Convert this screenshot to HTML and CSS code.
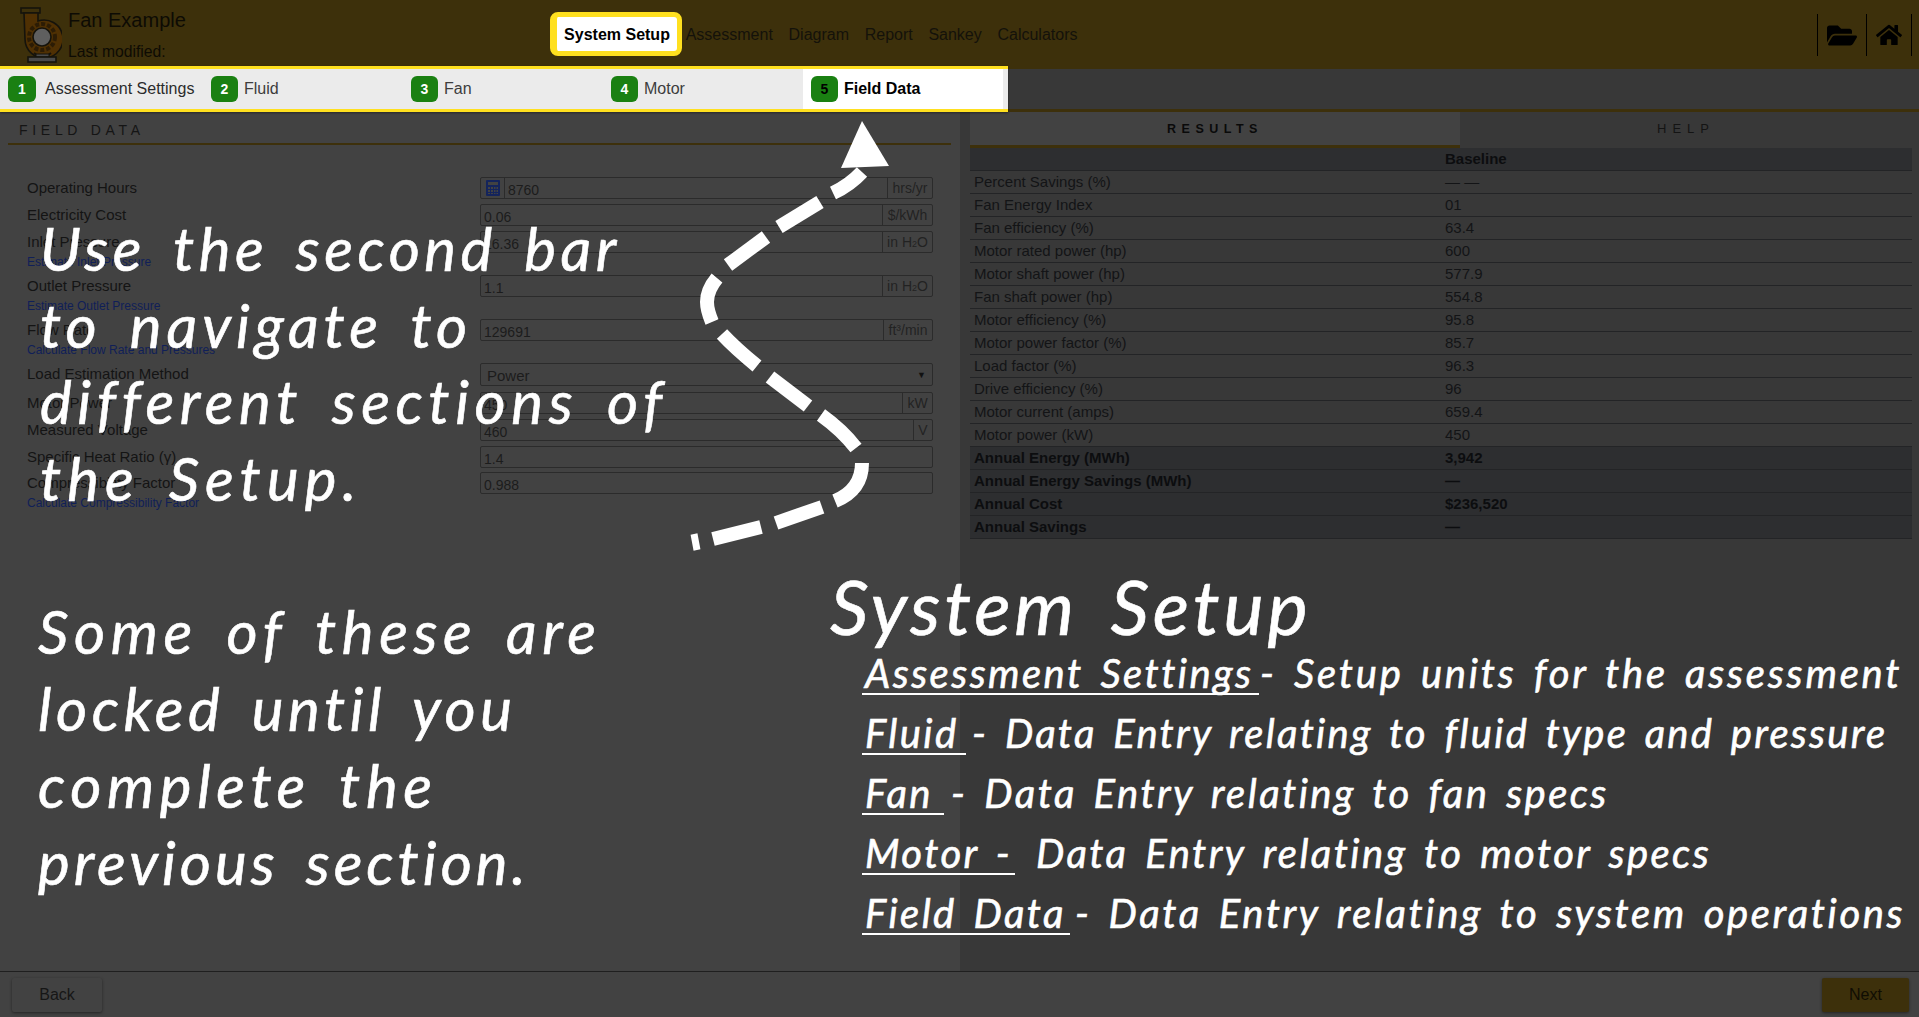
FILE: index.html
```html
<!DOCTYPE html>
<html lang="en">
<head>
<meta charset="utf-8">
<title>Fan Example - System Setup</title>
<link rel="stylesheet" href="styles.css">
</head>
<body>
<div class="app">
  <header class="topbar">
    <svg class="logo" viewBox="0 0 42 56" width="42" height="56">
      <rect x="1" y="1" width="19" height="5" fill="#3d300b" stroke="#15130c" stroke-width="1.6"/>
      <path d="M4 6 H18 V14 A19 19 0 1 1 5 32 Z" fill="#4f3003" stroke="#15130c" stroke-width="1.6"/>
      <circle cx="22" cy="30" r="13" fill="none" stroke="#2c1c05" stroke-width="4" stroke-dasharray="4 2"/>
      <circle cx="22" cy="30" r="9" fill="#5f5f5f" stroke="#15130c" stroke-width="1.6"/>
      <path d="M14 46 L18 49 H27 L31 46" fill="none" stroke="#15130c" stroke-width="2"/>
      <rect x="16" y="47" width="13" height="3" fill="#4a4a4a" stroke="#15130c"/>
      <rect x="8" y="50" width="28" height="5" fill="#4a4a4a" stroke="#15130c" stroke-width="1.6"/>
    </svg>
    <div class="title">
      <div class="title-name">Fan Example</div>
      <div class="title-mod">Last modified:</div>
    </div>
    <nav class="mainnav">
      <a class="mainnav-active">System Setup</a>
      <a>Assessment</a>
      <a>Diagram</a>
      <a>Report</a>
      <a>Sankey</a>
      <a>Calculators</a>
    </nav>
    <div class="tools">
      <span class="tool tool-folder">
        <svg viewBox="0 0 576 512" width="30" height="27"><path d="M572.694 292.093L500.27 416.248A63.997 63.997 0 0 1 444.989 448H45.025c-18.523 0-30.064-20.093-20.731-36.093l72.424-124.155A64 64 0 0 1 152 256h399.964c18.523 0 30.064 20.093 20.73 36.093zM152 224h328v-48c0-26.51-21.49-48-48-48H272l-64-64H48C21.49 64 0 85.49 0 112v278.046l69.077-118.418C86.214 242.25 117.989 224 152 224z"/></svg>
      </span>
      <span class="tool tool-home">
        <svg viewBox="0 0 576 512" width="26" height="24"><path d="M280.37 148.26L96 300.11V464a16 16 0 0 0 16 16l112.06-.29a16 16 0 0 0 15.92-16V368a16 16 0 0 1 16-16h64a16 16 0 0 1 16 16v95.64a16 16 0 0 0 16 16.05L464 480a16 16 0 0 0 16-16V300L295.67 148.26a12.19 12.19 0 0 0-15.3 0zM571.6 251.47L488 182.56V44.05a12 12 0 0 0-12-12h-56a12 12 0 0 0-12 12v72.61L318.47 43a48 48 0 0 0-61 0L4.34 251.47a12 12 0 0 0-1.6 16.9l25.5 31A12 12 0 0 0 45.15 301l235.22-193.74a12.19 12.19 0 0 1 15.3 0L530.9 301a12 12 0 0 0 16.9-1.6l25.5-31a12 12 0 0 0-1.7-16.93z"/></svg>
      </span>
    </div>
  </header>

  <div class="subbar">
    <div class="steps">
      <div class="step step-first"><span class="badge badge-wide">1</span><span class="step-label step-label-wide">Assessment Settings</span></div>
      <div class="step"><span class="badge">2</span><span class="step-label">Fluid</span></div>
      <div class="step"><span class="badge">3</span><span class="step-label">Fan</span></div>
      <div class="step"><span class="badge">4</span><span class="step-label">Motor</span></div>
      <div class="step step-active"><span class="badge">5</span><span class="step-label">Field Data</span></div>
    </div>
  </div>

  <main class="content">
    <section class="left">
      <h2 class="section-title">FIELD DATA</h2>
      <form class="form">
        <div class="row">
          <div class="labels"><label>Operating Hours</label></div>
          <div class="ctl"><span class="calc"><svg viewBox="0 0 14 16" width="14" height="16"><path fill="#14245c" d="M1 0h12a1 1 0 0 1 1 1v14a1 1 0 0 1-1 1H1a1 1 0 0 1-1-1V1a1 1 0 0 1 1-1zm1 2v3h10V2zm0 5v2h2V7zm3 0v2h2V7zm3 0v2h1.500V7zm2.500 0v2H12V7zM2 10v2h2v-2zm3 0v2h2v-2zm3 0v2h1.500v-2zm2.500 0v2H12v-2zM2 13v1h2v-1zm3 0v1h2v-1zm3 0v1h1.500v-1zm2.500 0v1H12v-1z"/></svg></span><span class="val">8760</span><span class="unit u45">hrs/yr</span></div>
        </div>
        <div class="row">
          <div class="labels"><label>Electricity Cost</label></div>
          <div class="ctl"><span class="val">0.06</span><span class="unit u50">$/kWh</span></div>
        </div>
        <div class="row row-tall">
          <div class="labels"><label>Inlet Pressure</label><a class="link">Estimate Inlet Pressure</a></div>
          <div class="ctl"><span class="val">16.36</span><span class="unit u50">in H<span class="sub">2</span>O</span></div>
        </div>
        <div class="row row-tall">
          <div class="labels"><label>Outlet Pressure</label><a class="link">Estimate Outlet Pressure</a></div>
          <div class="ctl"><span class="val">1.1</span><span class="unit u50">in H<span class="sub">2</span>O</span></div>
        </div>
        <div class="row row-tall">
          <div class="labels"><label>Flow Rate</label><a class="link">Calculate Flow Rate and Pressures</a></div>
          <div class="ctl"><span class="val">129691</span><span class="unit u49">ft³/min</span></div>
        </div>
        <div class="row row-select">
          <div class="labels"><label>Load Estimation Method</label></div>
          <div class="ctl ctl-select"><span class="val val-select">Power</span><span class="caret">▼</span></div>
        </div>
        <div class="row">
          <div class="labels"><label>Motor Power</label></div>
          <div class="ctl"><span class="val">450</span><span class="unit u30">kW</span></div>
        </div>
        <div class="row">
          <div class="labels"><label>Measured Voltage</label></div>
          <div class="ctl"><span class="val">460</span><span class="unit u19">V</span></div>
        </div>
        <div class="row row-short">
          <div class="labels"><label>Specific Heat Ratio (γ)</label></div>
          <div class="ctl"><span class="val">1.4</span></div>
        </div>
        <div class="row row-tall">
          <div class="labels"><label>Compressibility Factor</label><a class="link">Calculate Compressibility Factor</a></div>
          <div class="ctl"><span class="val">0.988</span></div>
        </div>
      </form>
    </section>

    <section class="right">
      <div class="tabs">
        <div class="tab tab-active">RESULTS</div>
        <div class="tab">HELP</div>
      </div>
      <div class="table">
        <div class="tr tr-strong"><span></span><span>Baseline</span></div>
        <div class="tr"><span>Percent Savings (%)</span><span>— —</span></div>
        <div class="tr"><span>Fan Energy Index</span><span>01</span></div>
        <div class="tr"><span>Fan efficiency (%)</span><span>63.4</span></div>
        <div class="tr"><span>Motor rated power (hp)</span><span>600</span></div>
        <div class="tr"><span>Motor shaft power (hp)</span><span>577.9</span></div>
        <div class="tr"><span>Fan shaft power (hp)</span><span>554.8</span></div>
        <div class="tr"><span>Motor efficiency (%)</span><span>95.8</span></div>
        <div class="tr"><span>Motor power factor (%)</span><span>85.7</span></div>
        <div class="tr"><span>Load factor (%)</span><span>96.3</span></div>
        <div class="tr"><span>Drive efficiency (%)</span><span>96</span></div>
        <div class="tr"><span>Motor current (amps)</span><span>659.4</span></div>
        <div class="tr"><span>Motor power (kW)</span><span>450</span></div>
        <div class="tr tr-strong"><span>Annual Energy (MWh)</span><span>3,942</span></div>
        <div class="tr tr-strong"><span>Annual Energy Savings (MWh)</span><span>—</span></div>
        <div class="tr tr-strong"><span>Annual Cost</span><span>$236,520</span></div>
        <div class="tr tr-strong"><span>Annual Savings</span><span>—</span></div>
      </div>
    </section>
  </main>

  <footer class="footer">
    <button class="btn" type="button">Back</button>
    <button class="btn btn-next" type="button">Next</button>
  </footer>
</div>

<div class="note note-use"><span class="ls-down">Use the second bar</span><br>to navigate to<br><span class="ls-up">different sections of</span><br><span class="ls-up2">the Setup.</span></div>
<div class="note note-some"><span class="ls-up">Some of these are</span><br><span class="ls-down">locked until you</span><br><span class="ls-up">complete the</span><br><span class="ls-tight">previous section.</span></div>
<div class="note note-title">System Setup</div>
<div class="note note-list">
  <div class="li"><span class="term t1">Assessment Settings</span><span class="wide">- Setup units for the assessment</span></div>
  <div class="li"><span class="term t2">Fluid</span><span class="narrow">- Data Entry relating to fluid type and pressure</span></div>
  <div class="li"><span class="term t3">Fan</span><span>- Data Entry relating to fan specs</span></div>
  <div class="li"><span class="term t4">Motor -</span><span>Data Entry relating to motor specs</span></div>
  <div class="li"><span class="term t5">Field Data</span><span class="slight">- Data Entry relating to system operations</span></div>
</div>

<svg class="arrow" viewBox="0 0 1919 1017" width="1919" height="1017">
  <g fill="none" stroke="#fff" stroke-width="14">
    <path stroke-width="7" d="M694 534L697 550"/>
    <path d="M713 539L761 527"/>
    <path d="M776 523L822 507"/>
    <path d="M835 501Q862 490 862 463"/>
    <path d="M856 448Q842 430 821 415"/>
    <path d="M808 406L770 377"/>
    <path d="M757 366Q735 348 722 334"/>
    <path d="M712 322Q707 310 707 302Q707 290 717 278"/>
    <path d="M728 265L766 237"/>
    <path d="M779 227L820 202"/>
    <path d="M833 193Q850 185 862 172"/>
  </g>
  <polygon fill="#fff" points="862,121 889,166 841,168"/>
</svg>
</body>
</html>
```
FILE: styles.css
```css
* { box-sizing: border-box; }
html, body { margin: 0; padding: 0; height: 100%; overflow: hidden; }
body { font-family: "Liberation Sans", Arial, sans-serif; background: #424242; color: #1f1f1f; position: relative; }
.app { width: 1919px; height: 1017px; display: flex; flex-direction: column; }

/* top bar */
.topbar { height: 69px; flex: none; background: #3d300b; display: flex; align-items: stretch; color: #0d0b04; padding-left: 20px; position: relative; }
.logo { flex: none; margin-top: 7px; }
.title { width: 488px; flex: none; padding-left: 6px; }
.title-name { font-size: 20px; line-height: 24px; margin-top: 8px; }
.title-mod { font-size: 15.700px; line-height: 20px; margin-top: 10px; }
.mainnav { display: flex; align-items: center; font-size: 16px; height: 44px; margin-top: 12px; gap: 15.700px; color: #14120a; }
.mainnav a { white-space: nowrap; padding-top: 2px; }
.mainnav .mainnav-active { background: #fff; color: #000; font-weight: 700; font-size: 16px; height: 44px; width: 132px; border: 5px solid #ffe01f; border-left-width: 7px; border-right-width: 5px; border-radius: 8px; display: flex; align-items: center; justify-content: center; margin-right: -12px; padding-top: 2px; }
.tools { margin-left: auto; margin-top: 14px; height: 42px; display: flex; border-left: 1px solid #000; margin-right: 7px; }
.tool { border-right: 1px solid #000; display: flex; align-items: center; justify-content: center; fill: #000; }
.tool-folder { width: 49px; }
.tool-home { width: 45px; }

/* steps bar */
.subbar { height: 43px; flex: none; background: #383838; border-bottom: 3px solid #3d300b; display: flex; position: relative; }
.steps { width: 1008px; height: 46px; margin-top: -3px; background: #ebebeb; border-top: 3px solid #ffe01f; border-bottom: 3px solid #ffe01f; display: flex; box-shadow: 0 1px 2px rgba(0,0,0,.4); position: relative; }
.step { width: 200px; flex: none; display: flex; align-items: center; padding-left: 8px; color: #3d3d3d; font-size: 16px; }
.step-first { width: 203px; color: #2b2b2b; }
.badge { width: 27px; height: 26px; background: #1a8012; border-radius: 6px; color: #fff; font-weight: 700; font-size: 14px; display: flex; align-items: center; justify-content: center; }
.badge-wide { width: 28px; }
.step-label { margin-left: 6px; white-space: nowrap; }
.step-label-wide { margin-left: 9px; }
.step-active { background: #fff; color: #000; font-weight: 700; }
.step-active .badge { color: #000; }

/* main */
.content { flex: 1; display: flex; min-height: 0; }
.left { width: 960px; flex: none; background: #424242; padding: 0 9px 0 8px; }
.section-title { margin: 0; height: 33px; border-bottom: 2px solid #3d300b; font-weight: 400; font-size: 14px; line-height: 37px; letter-spacing: 4.700px; padding-left: 11px; color: #151515; }
.form { margin: 32px 0 0 19px; width: 906px; }
.row { display: flex; height: 27px; }
.row-tall { height: 44px; }
.row-select { height: 29px; }
.row-short { height: 26px; }
.labels { width: 453px; flex: none; display: flex; flex-direction: column; }
.labels label { font-size: 15px; line-height: 22px; color: #141414; white-space: nowrap; }
.link { font-size: 12px; line-height: 18px; color: #101f58; white-space: nowrap; }
.ctl { width: 453px; height: 22px; flex: none; border: 1px solid #2b2b2b; border-radius: 2px; display: flex; align-items: center; font-size: 14px; color: #1c1c1c; }
.ctl-select { height: 23px; justify-content: space-between; }
.calc { width: 24px; height: 100%; border-right: 1px solid #2b2b2b; display: flex; align-items: center; justify-content: center; flex: none; }
.val { flex: 1; padding: 3px 0 0 3px; white-space: nowrap; }
.val-select { padding-left: 6px; padding-top: 1px; font-size: 15px; }
.unit { flex: none; height: 100%; border-left: 1px solid #2b2b2b; display: flex; align-items: center; justify-content: center; color: #222; white-space: nowrap; }
.sub { font-size: 9px; position: relative; top: 2px; }
.u45 { width: 45px; }
.u50 { width: 50px; }
.u49 { width: 49px; }
.u30 { width: 30px; }
.u19 { width: 19px; }
.caret { font-size: 9px; margin-right: 6px; color: #111; }

.right { flex: 1; background: #383838; padding: 0 7px 0 10px; min-width: 0; }
.tabs { display: flex; height: 36px; }
.tab { flex: 1; display: flex; align-items: center; justify-content: center; font-size: 13px; letter-spacing: 6px; color: #141414; padding-bottom: 3px; }
.tab-active { flex: none; width: 490px; background: #424242; border-bottom: 3px solid #3d300b; font-weight: 700; font-size: 12.500px; letter-spacing: 5.500px; color: #0a0a0a; padding-bottom: 0; }
.tr { display: grid; grid-template-columns: 471px 1fr; height: 23px; border-bottom: 1px solid #232426; font-size: 15px; line-height: 22px; color: #131416; white-space: nowrap; }
.tr span { padding-left: 4px; }
.tr-strong { background: #2d2e30; font-weight: 700; color: #0c0d0f; }

/* footer */
.footer { height: 46px; flex: none; background: #424242; border-top: 1px solid #1f1f1f; display: flex; justify-content: space-between; align-items: flex-start; padding: 6px 10px 0 12px; }
.btn { width: 90px; height: 34px; border: 0; border-radius: 2px; background: #424242; box-shadow: 0 1px 3px rgba(0,0,0,.45); font: 16px "Liberation Sans", Arial, sans-serif; color: #161616; padding: 0; }
.btn-next { width: 87px; background: #3d300b; color: #100d03; }

/* tutorial overlay */
.note { position: absolute; color: #fff; font-family: "Lato", "Open Sans", sans-serif; font-style: italic; white-space: nowrap; z-index: 3; -webkit-text-stroke: .6px #fff; }
.note-use { left: 40px; top: 210px; font-size: 60px; line-height: 76.700px; letter-spacing: 5px; word-spacing: 9px; }
.note-some { left: 38px; top: 593px; font-size: 60px; line-height: 77px; letter-spacing: 5px; word-spacing: 9px; }
.note-title { left: 830px; top: 558px; font-size: 76px; line-height: 96px; letter-spacing: 3.800px; word-spacing: 11px; }
.note-list { left: 862px; top: 643px; font-size: 40px; line-height: 60px; letter-spacing: 2.450px; word-spacing: 5px; }
.ls-down { letter-spacing: 4.500px; }
.ls-up { letter-spacing: 5.600px; }
.ls-up2 { letter-spacing: 6px; }
.ls-tight { letter-spacing: 4px; }
.wide { letter-spacing: 2.800px; }
.narrow { letter-spacing: 2.250px; }
.slight { letter-spacing: 2.600px; }
.li { display: flex; height: 60px; }
.term { display: block; height: 52px; line-height: 60px; border-bottom: 2px solid #fff; flex: none; padding-left: 3px; }
.t1 { width: 397px; margin-right: 1px; }
.t2 { width: 104px; margin-right: 6px; }
.t3 { width: 82px; margin-right: 7px; }
.t4 { width: 153px; margin-right: 21px; }
.t5 { width: 208px; margin-right: 5px; }
.arrow { position: absolute; left: 0; top: 0; z-index: 2; pointer-events: none; }
```
